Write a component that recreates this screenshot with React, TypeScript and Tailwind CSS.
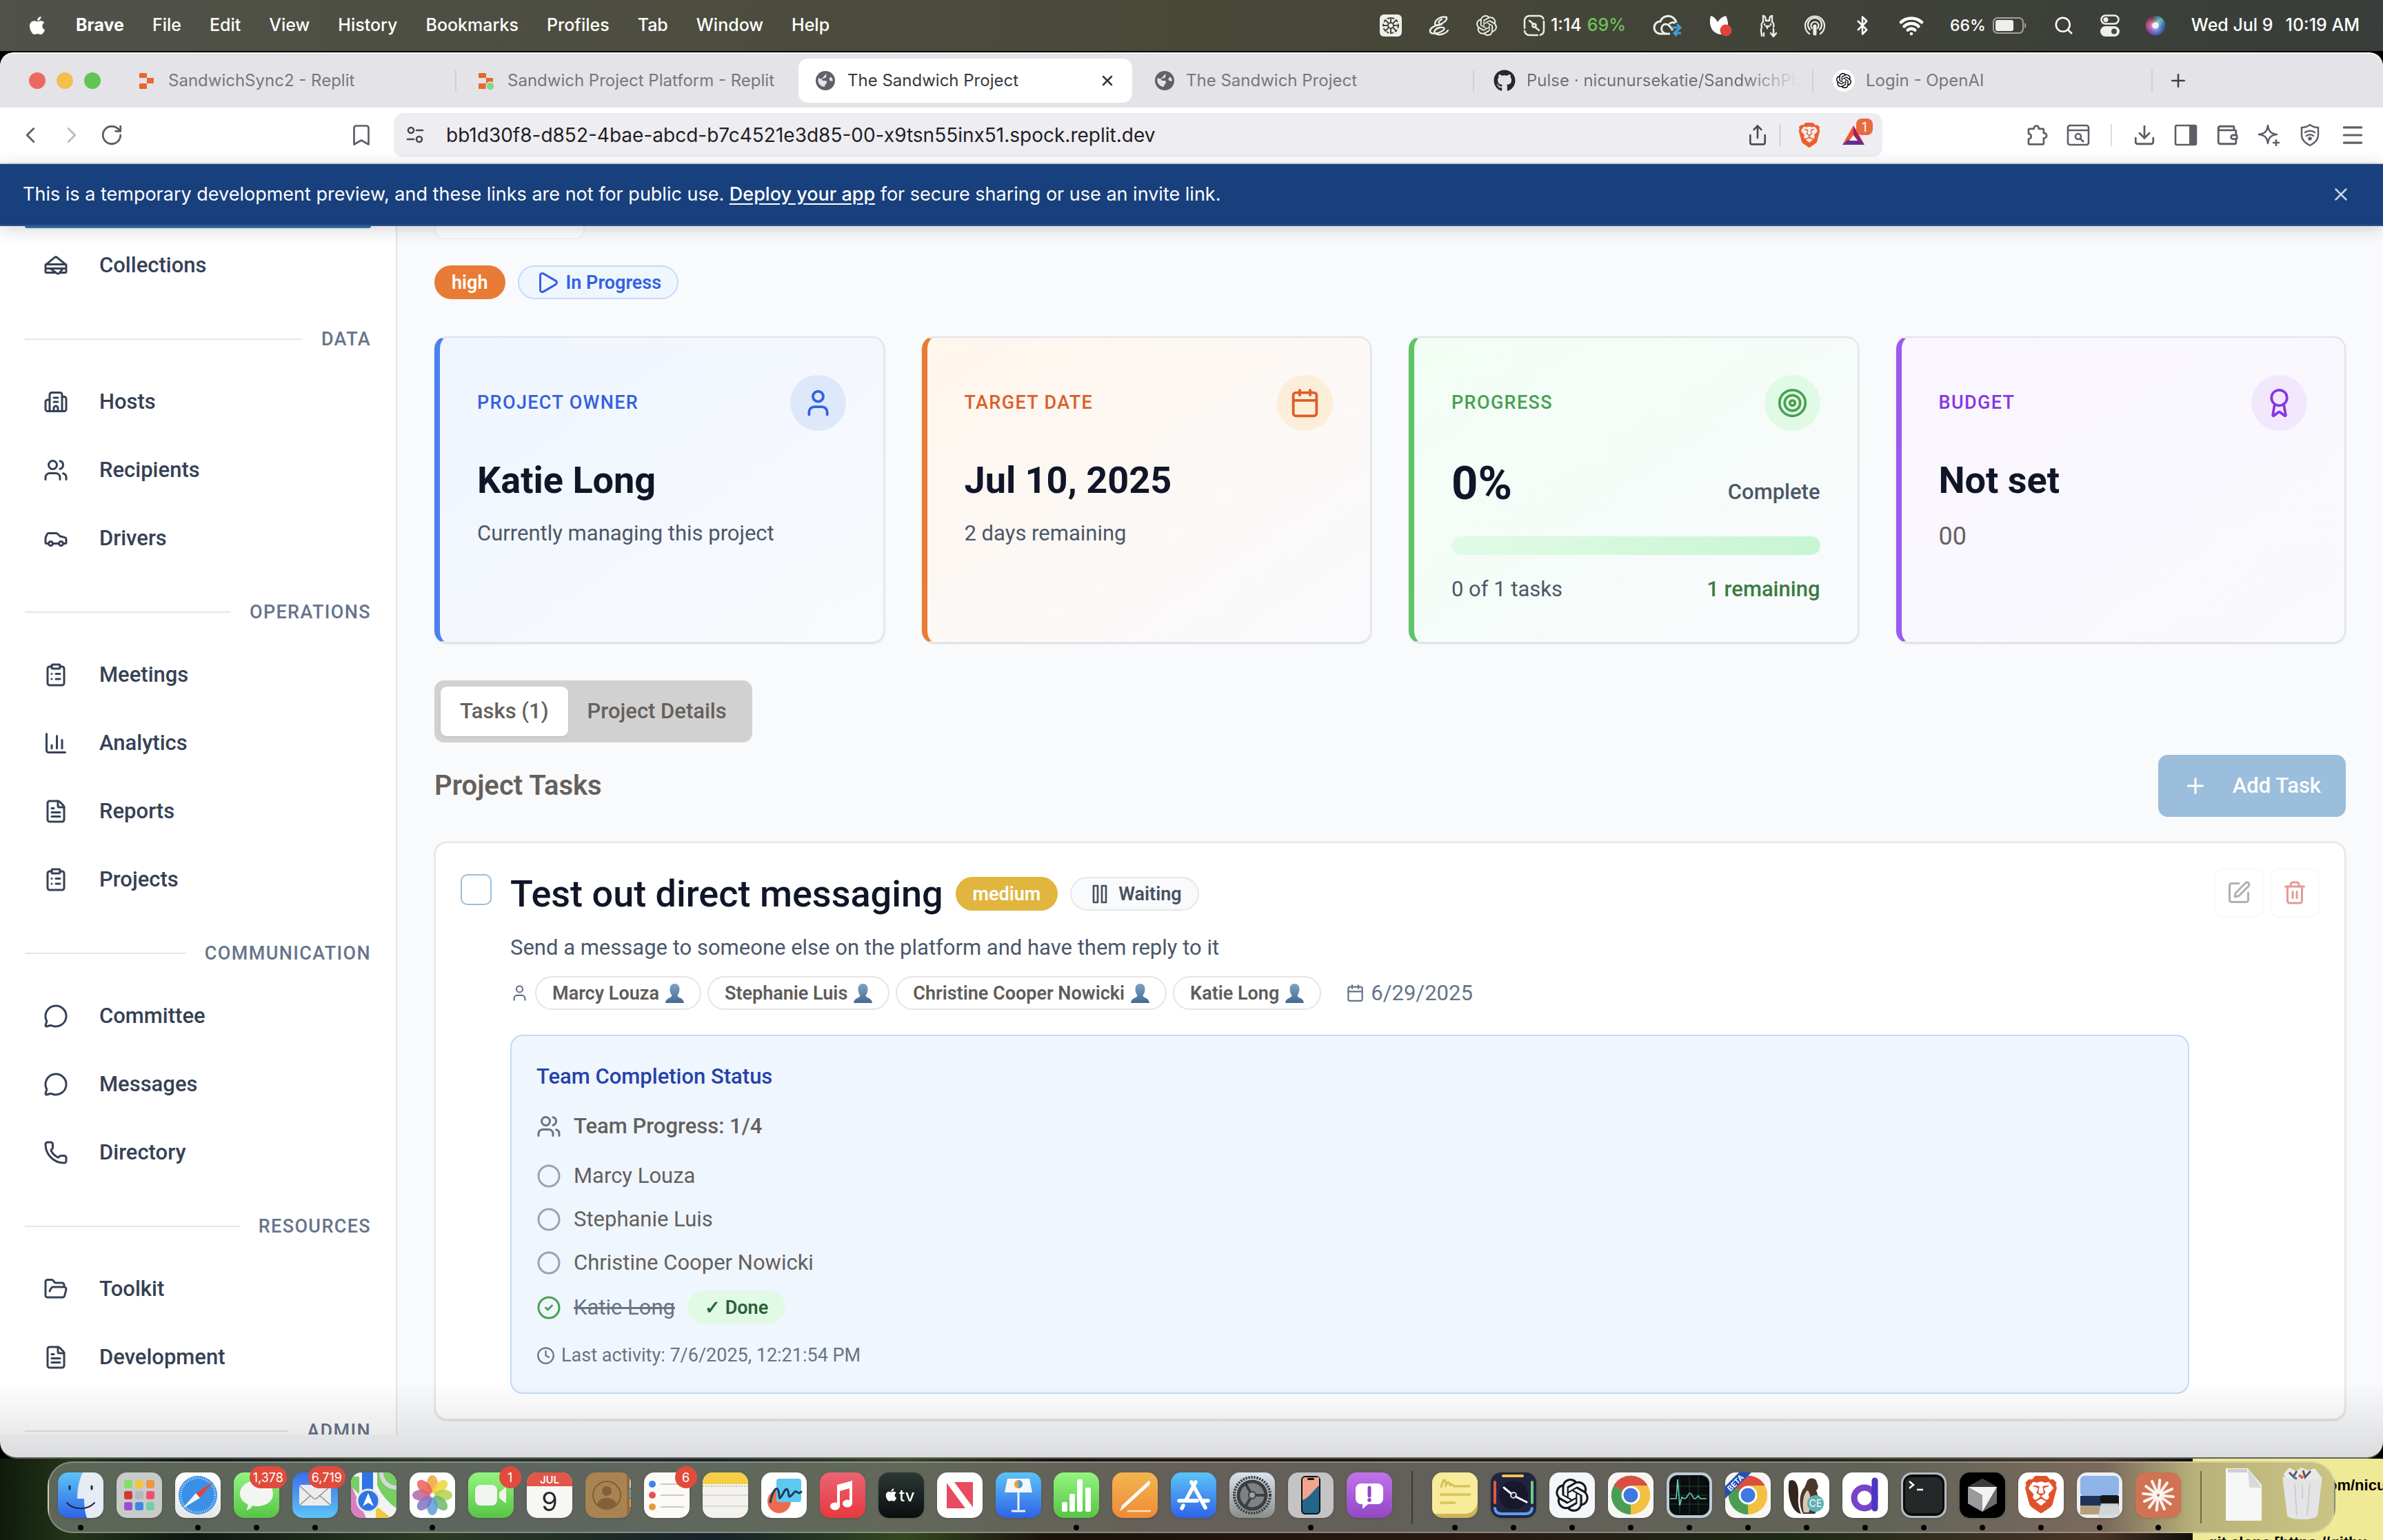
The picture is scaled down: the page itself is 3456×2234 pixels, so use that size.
import React from "react";
import {
  Sandwich, Building2, Users, Car, ClipboardList, ChartColumn, FileText, MessageCircle, Phone, FolderOpen,
  User, Calendar, Target, Award, Play, Plus, SquarePen, Trash2, Circle, CircleCheck, Clock, X,
  ChevronLeft, ChevronRight, RotateCw, Bookmark, Share, Download, Wallet, Menu,
  Search, Bluetooth, Wifi,
} from "lucide-react";
import { FaApple, FaGithub } from "react-icons/fa";
import { SiOpenai, SiBrave } from "react-icons/si";

type IconType = React.ComponentType<{ className?: string; strokeWidth?: number }>;

/* ---------- macOS menu bar ---------- */

function MenuBar() {
  const menus = ["File", "Edit", "View", "History", "Bookmarks", "Profiles", "Tab", "Window", "Help"];
  return (
    <header className="flex h-[74px] shrink-0 items-center justify-between bg-linear-to-r from-[#50524a] via-[#4a4938] to-[#383d3a] pr-[34px] pl-[39px] text-[25px] font-medium text-white">
      <nav className="flex items-center gap-[41px]">
        <FaApple className="size-[30px]" />
        <span className="font-bold">Brave</span>
        {menus.map((m) => (
          <button key={m}>{m}</button>
        ))}
      </nav>
      <div className="flex items-center gap-[38px]">
        <svg viewBox="0 0 32 32" className="size-8">
          <rect width="32" height="32" rx="6" fill="#eeeeea" />
          <g stroke="#45463a" strokeWidth="2" fill="none">
            <circle cx="16" cy="16" r="4" />
            <circle cx="16" cy="16" r="11" strokeDasharray="4 2.6" />
            <path d="M16 4v8M16 20v8M4 16h8M20 16h8M7.500 7.500l5.500 5.500M19 19l5.500 5.500M24.500 7.500L19 13M13 19l-5.500 5.500" />
          </g>
        </svg>
        <svg viewBox="0 0 32 32" className="size-8" fill="none" stroke="#eeeeea" strokeWidth="2.4" strokeLinecap="round">
          <path d="M27 4c-8-2-16 3-17 9 0 4 6 3 10 1M27 4c1 4-4 9-12 11C8 17 2 20 3 25c2 5 15 2 20-3 2-3-2-4-6-3-6 1-10 6-6 9 5 3 15 0 18-5M20 7c-3 1-5 4-4 5" />
        </svg>
        <SiOpenai className="size-[30px] text-[#eeeeea]" />
        <div className="flex items-center gap-2">
          <svg viewBox="0 0 32 32" className="size-8" fill="none" stroke="#eeeeea" strokeWidth="2.5" strokeLinecap="round">
            <rect x="2" y="2" width="28" height="28" rx="7" strokeDasharray="22 4" />
            <path d="M9 9l6 5M17 18l6 5" />
            <circle cx="16" cy="16" r="2.500" />
          </svg>
          <span>1:14</span>
          <span className="text-[#6cc35a]">69%</span>
        </div>
        <svg viewBox="0 0 44 34" className="h-[34px] w-11" fill="none" stroke="#eeeeea" strokeWidth="3">
          <path d="M12 29a9 9 0 0 1 0-18A12 12 0 0 1 35 13M20 29c-9-2-8-14 0-14 5 0 7 5 10 9M25 15c2-3 6-3 8-1" />
          <path d="M12 29h14" />
          <path d="M28 20h12M36 15l5 5-5 5M42 28H32M36 24l-4 4 4 4" stroke="#3fa2dd" strokeWidth="3" />
        </svg>
        <svg viewBox="0 0 34 34" className="size-[34px]">
          <path d="M3 3c5 1 8 5 10 9 3-5 7-8 12-9 3 6 4 13 2 19l-9 8C6 29-1 18 3 3z" fill="#fff" />
          <circle cx="25" cy="24" r="8.500" fill="#e0443c" />
        </svg>
        <svg viewBox="0 0 28 34" className="h-[34px] w-7" fill="none" stroke="#eeeeea" strokeWidth="2.400" strokeLinecap="round">
          <path d="M5 32c0-4-1-5-1-8 0-2 1-3 1-5-1-3 0-6 2-7V3c3 0 4 4 4 7h5c0-3 1-7 4-7v9c2 1 3 4 2 7M11 18h5M13 18v3M9 15v1M18 15v1" />
          <path d="M8 32v-4M22 22v10M18 28l4 5 4-5" />
        </svg>
        <svg viewBox="0 0 32 32" className="size-8" fill="none" stroke="#eeeeea" strokeWidth="2.200" strokeLinecap="round">
          <path d="M8 28a14 14 0 1 1 16 0M9 22a10 10 0 1 1 14 0M12 20a5.500 5.500 0 1 1 8 0" />
          <path d="M16 17v11" strokeWidth="5" />
        </svg>
        <Bluetooth className="size-[30px]" strokeWidth={2} />
        <Wifi className="size-[36px]" strokeWidth={3} />
        <div className="flex items-center gap-[10px]">
          <span className="text-[23px]">66%</span>
          <svg viewBox="0 0 50 24" className="h-6 w-[50px]">
            <rect x="1" y="1" width="43" height="22" rx="6" fill="none" stroke="#a2a39c" strokeWidth="2" />
            <rect x="4" y="4" width="26" height="16" rx="3" fill="#eee" />
            <path d="M46 8c3 1 3 7 0 8z" fill="#a2a39c" />
          </svg>
        </div>
        <Search className="size-[30px]" strokeWidth={2} />
        <svg viewBox="0 0 28 32" className="h-8 w-7">
          <rect x="1.500" y="1.500" width="25" height="12" rx="6" fill="none" stroke="#eee" strokeWidth="2.500" />
          <circle cx="8" cy="7.500" r="3.500" fill="#eee" />
          <rect x="0" y="17" width="28" height="15" rx="7.500" fill="#eee" />
          <circle cx="20" cy="24.500" r="4" fill="#45483a" />
        </svg>
        <span className="size-7 rounded-full bg-[conic-gradient(from_40deg,#3fb6a8,#2a4fa8,#3a62c8,#7a3fb0,#c23a6b,#5a3048,#3fb6a8)] p-[9px]">
          <span className="block size-[10px] rounded-full bg-white/90 shadow-[0_0_6px_4px_rgba(255,255,255,0.5)]" />
        </span>
        <div className="flex gap-[18px]">
          <span>Wed Jul 9</span>
          <span>10:19 AM</span>
        </div>
      </div>
    </header>
  );
}

/* ---------- browser chrome ---------- */

function GlobeDot() {
  return (
    <svg viewBox="0 0 30 30" className="size-[30px] shrink-0">
      <circle cx="15" cy="15" r="14" fill="#5f6268" />
      <path d="M17 4c-2 3 1 4-2 7-2 1-5 0-5 3 2 2 5 0 7 2 1 3-3 4-3 8C6 23 3 17 5 11c2 1 4 2 5 1M24 10c-3 0-4 2-3 4s3 2 5 1" fill="#e4e3e8" />
    </svg>
  );
}

function ReplitMark({ live }: { live?: boolean }) {
  return (
    <svg viewBox="0 0 30 30" className="size-[30px] shrink-0">
      <path d="M5 4h9a1 1 0 0 1 1 1v6H5a1 1 0 0 1-1-1V5a1 1 0 0 1 1-1zM15 11h9a1 1 0 0 1 1 1v6a1 1 0 0 1-1 1h-9zM5 19h10v7a1 1 0 0 1-1 1H5a1 1 0 0 1-1-1v-6a1 1 0 0 1 1-1z" fill="#e8672c" />
      {live && <circle cx="21" cy="23" r="6" fill="#7ed98a" stroke="#e4e3e8" strokeWidth="1.500" />}
    </svg>
  );
}

function BrowserTab({ icon, title, active, fade, line }: { icon: React.ReactNode; title: string; active?: boolean; fade?: boolean; line?: boolean }) {
  return (
    <div className={line ? "flex h-8 w-[492px] items-center border-r-2 border-[#d0cfd6]" : "flex h-8 w-[492px] items-center"}>
      <button
        className={
          active
            ? "mx-[4px] flex h-16 flex-1 items-center gap-[17px] overflow-hidden rounded-[14px] bg-white px-6 text-[#36383d]"
            : "flex h-16 flex-1 items-center gap-4 overflow-hidden pr-5 pl-7 text-[#77777d]"
        }
      >
        {icon}
        <span className={fade ? "flex-1 overflow-hidden bg-linear-to-r from-[#6d6d73] from-80% to-transparent bg-clip-text text-left whitespace-nowrap text-transparent" : "flex-1 text-left whitespace-nowrap"}>{title}</span>
        {active && <X className="size-6 text-[#36383d]" strokeWidth={2.500} />}
      </button>
    </div>
  );
}

function TabStrip() {
  return (
    <div className="flex h-20 shrink-0 items-center rounded-t-[20px] border-t-2 border-white bg-[#e4e3e8] pl-[42px] text-[24px]">
      <div className="flex w-[128px] gap-4">
        <span className="size-6 rounded-full bg-[#ed6a5e]" />
        <span className="size-6 rounded-full bg-[#f4bf4f]" />
        <span className="size-6 rounded-full bg-[#61c554]" />
      </div>
      <BrowserTab icon={<ReplitMark />} title="SandwichSync2 - Replit" line />
      <BrowserTab icon={<ReplitMark live />} title="Sandwich Project Platform - Replit" />
      <BrowserTab icon={<GlobeDot />} title="The Sandwich Project" active />
      <BrowserTab icon={<GlobeDot />} title="The Sandwich Project" line />
      <BrowserTab icon={<FaGithub className="size-[32px] shrink-0 text-[#24292f]" />} title="Pulse · nicunursekatie/SandwichPla" fade line />
      <BrowserTab
        icon={
          <span className="flex size-[32px] shrink-0 items-center justify-center rounded-full bg-white">
            <SiOpenai className="size-[22px] text-black" />
          </span>
        }
        title="Login - OpenAI"
        line
      />
      <button aria-label="New tab" className="ml-[22px]">
        <Plus className="size-[30px] text-[#3e4045]" strokeWidth={2} />
      </button>
    </div>
  );
}

function Toolbar() {
  return (
    <div className="flex h-[82px] shrink-0 items-center justify-between border-b-2 border-[#dedde2] bg-white px-[25px] text-[#5c5f66]">
      <div className="flex items-center gap-[22px]">
        <button aria-label="Back"><ChevronLeft className="size-[38px]" strokeWidth={1.800} /></button>
        <button aria-label="Forward" className="text-[#bcbdc1]"><ChevronRight className="size-[38px]" strokeWidth={1.800} /></button>
        <button aria-label="Reload"><RotateCw className="size-[34px]" strokeWidth={2} /></button>
      </div>
      <button aria-label="Bookmark" className="ml-[327px]"><Bookmark className="size-[36px]" strokeWidth={1.800} /></button>
      <div className="mr-[207px] ml-[29px] flex h-16 flex-1 items-center gap-6 rounded-[14px] bg-[#eeedf2] pr-[22px] pl-[17px]">
        <svg viewBox="0 0 28 28" className="size-7" fill="none" stroke="#45474d" strokeWidth="2.600" strokeLinecap="round">
          <circle cx="8" cy="7" r="4" /><path d="M16 7h9M3 20h9" /><circle cx="20" cy="20" r="4" />
        </svg>
        <input aria-label="Address" readOnly defaultValue="bb1d30f8-d852-4bae-abcd-b7c4521e3d85-00-x9tsn55inx51.spock.replit.dev" className="ml-[7px] flex-1 bg-transparent text-[28px] text-[#1f2024] outline-none" />
        <Share className="size-[32px] text-[#4a4c52]" strokeWidth={2} />
        <span className="-ml-2 h-8 w-px bg-[#b9b9c0]" />
        <SiBrave className="size-[36px] text-[#ee5f2c]" />
        <span className="relative ml-1 flex">
          <svg viewBox="0 0 38 34" className="h-[34px] w-[38px]">
            <path d="M18 3L2 31h11l5-10z" fill="#ee5a2a" /><path d="M18 3l16 28-11-5-5-9z" fill="#9e1f63" /><path d="M2 31h32l-9-7H10z" fill="#662d91" /><path d="M18 17l-6 8h12z" fill="#fff" />
          </svg>
          <span className="absolute -top-[7px] left-[22px] flex h-6 w-6 items-center justify-center rounded-lg bg-[#ea6a3f] text-[18px] text-white">1</span>
        </span>
      </div>
      <div className="flex items-center gap-[26px]">
        <svg viewBox="0 0 24 24" className="size-[34px]" fill="none" stroke="currentColor" strokeWidth="1.900" strokeLinejoin="round">
          <path d="M9 5.500V5a2.500 2.500 0 0 1 5 0v.500h4a1 1 0 0 1 1 1V10h.500a2.500 2.500 0 0 1 0 5H19v5.500a1 1 0 0 1-1 1H4.500a1 1 0 0 1-1-1V16c3.500 0 3.500-5.500 0-5.500v-4a1 1 0 0 1 1-1z" />
        </svg>
        <svg viewBox="0 0 34 34" className="size-[34px]" fill="none" stroke="currentColor" strokeWidth="2.600">
          <rect x="2" y="3" width="30" height="28" rx="3" /><path d="M2 10h30" /><circle cx="17" cy="19" r="4" /><path d="M20 22l5 5" />
        </svg>
        <span className="mx-1 h-8 w-[2px] bg-[#dcdce1]" />
        <Download className="size-[34px]" strokeWidth={2} />
        <svg viewBox="0 0 34 34" className="size-[34px]">
          <rect x="2" y="3" width="30" height="28" rx="2" fill="none" stroke="currentColor" strokeWidth="2.600" /><path d="M22 3h9v28h-9z" fill="currentColor" />
        </svg>
        <Wallet className="size-[34px]" strokeWidth={2} />
        <svg viewBox="0 0 34 34" className="size-[34px]" fill="none" stroke="currentColor" strokeWidth="2.500" strokeLinejoin="round">
          <path d="M16 3c1 8 4 12 13 13-9 1-12 5-13 13-1-8-4-12-13-13 9-1 12-5 13-13z" /><path d="M28 23v10M23 28h10" />
        </svg>
        <svg viewBox="0 0 34 34" className="size-[34px]" fill="none" stroke="currentColor" strokeWidth="2.500" strokeLinecap="round">
          <path d="M17 2c4 3 8 4 12 4v11c0 7-6 12-12 15C11 29 5 24 5 17V6c4 0 8-1 12-4z" /><path d="M10 13c4-3 10-3 14 0M12 18c3-2 7-2 10 0" /><circle cx="17" cy="22" r="1.500" fill="currentColor" />
        </svg>
        <Menu className="size-[38px]" strokeWidth={2} />
      </div>
    </div>
  );
}

function PreviewBanner() {
  return (
    <div className="z-10 flex h-[90px] shrink-0 items-center justify-between border-b-2 border-[#2f4f8c] bg-[#18407d] pr-[46px] pl-[33px] text-[27px] text-white shadow-[0_4px_24px_rgba(0,0,0,0.18)]">
      <p>
        This is a temporary development preview, and these links are not for public use.{" "}
        <a href="#deploy" className="font-medium underline underline-offset-4">Deploy your app</a> for secure sharing or use an invite link.
      </p>
      <button aria-label="Dismiss"><X className="size-[30px] text-[#c9d5e8]" strokeWidth={2} /></button>
    </div>
  );
}

/* ---------- sidebar ---------- */

function NavItem({ icon: Icon, label }: { icon: IconType; label: string }) {
  return (
    <a href={`#${label.toLowerCase()}`} className="mb-[9px] flex h-[90px] items-center gap-[45px] px-[27px] text-[31px] font-medium">
      <Icon className="size-9" strokeWidth={2} />
      {label}
    </a>
  );
}

function NavHeading({ label }: { label: string }) {
  return (
    <h2 className="mt-[46px] mb-[30px] flex h-8 items-center gap-[27px] text-[27px] font-medium tracking-wider text-[#67748b]">
      <span className="h-[2px] flex-1 bg-[#e2e7ee]" />
      {label}
    </h2>
  );
}

const navGroups: { heading: string; items: [IconType, string][] }[] = [
  { heading: "DATA", items: [[Building2, "Hosts"], [Users, "Recipients"], [Car, "Drivers"]] },
  { heading: "OPERATIONS", items: [[ClipboardList, "Meetings"], [ChartColumn, "Analytics"], [FileText, "Reports"], [ClipboardList, "Projects"]] },
  { heading: "COMMUNICATION", items: [[MessageCircle, "Committee"], [MessageCircle, "Messages"], [Phone, "Directory"]] },
  { heading: "RESOURCES", items: [[FolderOpen, "Toolkit"], [FileText, "Development"]] },
  { heading: "ADMIN", items: [] },
];

function Sidebar() {
  return (
    <aside className="w-[576px] shrink-0 overflow-hidden border-r-2 border-[#e1e6ee] bg-white px-9 text-[#364155]">
      <div className="mb-[9px] h-[3px] rounded-b-[14px] bg-[#2f79b0]" />
      <NavItem icon={Sandwich} label="Collections" />
      {navGroups.map((g) => (
        <React.Fragment key={g.heading}>
          <NavHeading label={g.heading} />
          {g.items.map(([icon, label]) => (
            <NavItem key={label} icon={icon} label={label} />
          ))}
        </React.Fragment>
      ))}
    </aside>
  );
}

/* ---------- project page ---------- */

function StatCard({ label, icon: Icon, tone, labelTone, dot, children }: { label: string; icon: IconType; tone: string; labelTone: string; dot: string; children: React.ReactNode }) {
  return (
    <section className={`flex-1 rounded-[18px] border-2 border-l-8 bg-linear-to-br to-[#f9fafd] px-[54px] pt-[54px] pb-[54px] shadow-sm ${tone}`}>
      <div className={`mb-9 flex items-center justify-between ${labelTone}`}>
        <h3 className="text-[27px] font-medium tracking-wider">{label}</h3>
        <span className={`rounded-full p-[18px] ${dot}`}>
          <Icon className="size-[45px]" strokeWidth={2} />
        </span>
      </div>
      {children}
    </section>
  );
}

const bigValue = "mb-[18px] text-[54px] leading-[72px] font-bold text-[#101628]";

function StatCards() {
  return (
    <div className="mt-[54px] flex gap-[54px]">
      <StatCard label="PROJECT OWNER" icon={User} tone="border-[#e3e4e7] border-l-[#4b80ee] from-[#eff5ff]" labelTone="text-[#3561e0]" dot="bg-[#dde9fb]">
        <p className={bigValue}>Katie Long</p>
        <p className="text-[31px] leading-[45px] text-[#4c5768]">Currently managing this project</p>
      </StatCard>
      <StatCard label="TARGET DATE" icon={Calendar} tone="border-[#e3e4e7] border-l-[#e87b35] from-[#fff6ed]" labelTone="text-[#dc5f28]" dot="bg-[#fdeed9]">
        <p className={bigValue}>Jul 10, 2025</p>
        <p className="text-[31px] leading-[45px] text-[#4c5768]">2 days remaining</p>
      </StatCard>
      <StatCard label="PROGRESS" icon={Target} tone="border-[#e3e4e7] border-l-[#5dc467] from-[#f2fef4]" labelTone="text-[#49a152]" dot="bg-[#e1fae6]">
        <div className="mb-9 flex items-baseline justify-between">
          <span className="text-[67px] leading-[81px] font-bold text-[#101628]">0%</span>
          <span className="text-[31px] leading-[45px] font-medium text-[#4c5768]">Complete</span>
        </div>
        <div role="progressbar" aria-valuenow={0} className="mb-[27px] h-[27px] rounded-full bg-linear-to-r from-[#e1fbe6] to-[#c7f5d2]" />
        <div className="flex justify-between text-[31px] leading-[45px]">
          <span className="text-[#4c5768]">0 of 1 tasks</span>
          <span className="font-medium text-[#3a7c43]">1 remaining</span>
        </div>
      </StatCard>
      <StatCard label="BUDGET" icon={Award} tone="border-[#e3e4e7] border-l-[#9b5bee] from-[#faf5ff]" labelTone="text-[#8637e2]" dot="bg-[#f1e8fd]">
        <p className={bigValue}>Not set</p>
        <p className="text-[36px] leading-[54px] text-[#66615e]">00</p>
      </StatCard>
    </div>
  );
}

const badge = "flex h-[49px] items-center gap-[9px] rounded-full border-2 px-[23px] text-[27px] leading-9 font-semibold";

function PauseBars({ className }: { className?: string }) {
  return (
    <svg viewBox="0 0 24 24" className={className} fill="none" stroke="currentColor" strokeWidth="1.800" strokeLinejoin="round">
      <rect x="6" y="4" width="4" height="16" />
      <rect x="14" y="4" width="4" height="16" />
    </svg>
  );
}

function Chip({ name }: { name: string }) {
  return (
    <span className={`${badge} border-[#e5e5e7] text-[#615c59]`}>
      {name}
      <svg viewBox="0 0 27 28" className="h-7 w-[27px]">
        <defs>
          <linearGradient id="bust" x1="0" y1="0" x2="0" y2="1">
            <stop offset="0" stopColor="#7fa3c4" />
            <stop offset="1" stopColor="#456a92" />
          </linearGradient>
        </defs>
        <path d="M13.500 0c4.500 0 7 3 7 8 0 4-1.500 7-3 9 0 4 9 3 9.500 11H0c.5-8 9.500-7 9.500-11-1.500-2-3-5-3-9 0-5 2.500-8 7-8z" fill="url(#bust)" />
      </svg>
    </span>
  );
}

const people = ["Marcy Louza", "Stephanie Luis", "Christine Cooper Nowicki"];

function TeamStatus() {
  return (
    <section className="mt-9 flex flex-col rounded-[18px] border-2 border-[#c3dafa] bg-[#eff6fe] p-9 text-[31px] leading-[45px] text-[#64605d]">
      <h4 className="font-medium text-[#2642a9]">Team Completion Status</h4>
      <p className="mt-[27px] mb-[9px] flex items-center gap-[18px] font-medium">
        <Users className="size-9 text-[#6b7280]" strokeWidth={2} />
        Team Progress: 1/4
      </p>
      <ul>
        {people.map((p) => (
          <li key={p} className="mt-[18px] flex items-center gap-[18px]">
            <Circle className="size-9 text-[#9ca3af]" strokeWidth={2} />
            {p}
          </li>
        ))}
        <li className="mt-[18px] flex items-center gap-[18px]">
          <CircleCheck className="size-9 text-[#49a152]" strokeWidth={2} />
          <span className="text-[#6b7280] line-through">Katie Long</span>
          <span className={`${badge} border-transparent bg-[#e1fae6] text-[#2d6238]`}>✓ Done</span>
        </li>
      </ul>
      <p className="mt-[27px] flex items-center gap-[9px] text-[27px] leading-9 text-[#6b7280]">
        <Clock className="size-[27px]" strokeWidth={2} />
        Last activity: 7/6/2025, 12:21:54 PM
      </p>
    </section>
  );
}

function TaskCard() {
  return (
    <article className="mt-9 flex items-start rounded-[18px] border-2 border-[#e5e5e8] bg-white p-9 shadow-sm">
      <input type="checkbox" aria-label="Mark task complete" className="mt-[9px] size-[45px] appearance-none rounded-[10px] border-2 border-[#9abedb] bg-white" />
      <div className="ml-[27px] flex-1">
        <div className="flex h-[75px] items-center gap-[18px]">
          <h3 className="text-[54px] leading-[72px] font-medium text-[#101628]">Test out direct messaging</h3>
          <span className={`${badge} border-transparent bg-[#e1b53e] bg-origin-border text-white`}>medium</span>
          <span className={`${badge} border-[#e5e7eb] bg-[#f9fafc] text-[#47515f]`}>
            <PauseBars className="size-9" />
            Waiting
          </span>
        </div>
        <p className="mt-[18px] text-[31px] leading-[45px] text-[#4a576a]">Send a message to someone else on the platform and have them reply to it</p>
        <div className="mt-[19px] flex items-center gap-9 text-[#667489]">
          <div className="flex items-center gap-[9px]">
            <User className="size-[27px]" strokeWidth={2} />
            {[...people, "Katie Long"].map((p) => (
              <Chip key={p} name={p} />
            ))}
          </div>
          <span className="flex items-center gap-[9px] text-[31px] leading-[45px]">
            <Calendar className="size-[27px]" strokeWidth={2} />
            6/29/2025
          </span>
        </div>
        <TeamStatus />
      </div>
      <div className="ml-9 flex gap-[9px]">
        <button aria-label="Edit task" className="flex size-[72px] items-center justify-center rounded-[14px] border-2 border-[#f8f8f9] text-[#b3aeae]">
          <SquarePen className="size-9" strokeWidth={2} />
        </button>
        <button aria-label="Delete task" className="flex size-[72px] items-center justify-center rounded-[14px] border-2 border-[#f8f8f9] text-[#e59a95]">
          <Trash2 className="size-9" strokeWidth={2} />
        </button>
      </div>
    </article>
  );
}

function ProjectPage() {
  return (
    <main className="flex-1 overflow-hidden bg-[#f9fafc] px-[54px]">
      <div className="flex h-[57px] items-start">
        <div className="h-[19px] w-[218px] rounded-b-[14px] border-x-2 border-b-2 border-[#f2f3f5] bg-white" />
      </div>
      <div className="flex gap-[18px]">
        <span className={`${badge} border-[#e87b35] bg-[#e87b35] text-white`}>high</span>
        <span className={`${badge} border-[#c3dafa] bg-[#eff6fe] text-[#3561e0]`}>
          <Play className="size-9" strokeWidth={2} />
          In Progress
        </span>
      </div>
      <StatCards />
      <div role="tablist" className="mt-[54px] inline-flex rounded-[14px] bg-[#d1d1d1] p-[9px] text-[31px] font-medium text-[#66605c]">
        <button role="tab" aria-selected className="h-[72px] rounded-[9px] bg-white px-7 shadow-sm">Tasks (1)</button>
        <button role="tab" className="h-[72px] px-7">Project Details</button>
      </div>
      <div className="mt-[18px] flex items-center justify-between">
        <h2 className="text-[40px] font-semibold text-[#66605c]">Project Tasks</h2>
        <button className="flex h-[90px] items-center gap-9 rounded-[14px] bg-[#9abedb] px-9 text-[31px] font-medium text-white">
          <Plus className="size-9" strokeWidth={2} />
          Add Task
        </button>
      </div>
      <TaskCard />
    </main>
  );
}

/* ---------- dock ---------- */

function Tile({ bg, children }: { bg: string; children?: React.ReactNode }) {
  return (
    <svg viewBox="0 0 66 66" className="size-[66px] drop-shadow">
      <defs>
        <linearGradient id="g-blue" x1="0" y1="0" x2="0" y2="1"><stop offset="0" stopColor="#5bc4f8" /><stop offset="1" stopColor="#2f63e6" /></linearGradient>
        <linearGradient id="g-mail" x1="0" y1="0" x2="0" y2="1"><stop offset="0" stopColor="#3a6ee8" /><stop offset="1" stopColor="#5ec4f8" /></linearGradient>
        <linearGradient id="g-green" x1="0" y1="0" x2="0" y2="1"><stop offset="0" stopColor="#92f57e" /><stop offset="1" stopColor="#58c546" /></linearGradient>
        <linearGradient id="g-red" x1="0" y1="0" x2="0" y2="1"><stop offset="0" stopColor="#ec6474" /><stop offset="1" stopColor="#e8383e" /></linearGradient>
        <linearGradient id="g-orange" x1="0" y1="0" x2="0" y2="1"><stop offset="0" stopColor="#f4b550" /><stop offset="1" stopColor="#ef8a37" /></linearGradient>
        <linearGradient id="g-purple" x1="0" y1="0" x2="0" y2="1"><stop offset="0" stopColor="#c173ea" /><stop offset="1" stopColor="#9147c4" /></linearGradient>
        <linearGradient id="g-grey" x1="0" y1="0" x2="0" y2="1"><stop offset="0" stopColor="#d8e4ec" /><stop offset="1" stopColor="#8b8d8e" /></linearGradient>
        <linearGradient id="g-dark" x1="0" y1="0" x2="0" y2="1"><stop offset="0" stopColor="#2c3835" /><stop offset="1" stopColor="#0b0e10" /></linearGradient>
        <linearGradient id="g-white" x1="0" y1="0" x2="0" y2="1"><stop offset="0" stopColor="#ffffff" /><stop offset="1" stopColor="#e6e6e8" /></linearGradient>
        <clipPath id="tile"><rect width="66" height="66" rx="15" /></clipPath>
      </defs>
      <g clipPath="url(#tile)">
        <rect width="66" height="66" fill={bg} />
        {children}
      </g>
    </svg>
  );
}

function ChromeDisc() {
  return (
    <>
      <path d="M33 33L8.600 19A28 28 0 0 1 57.400 19z" fill="#d94f41" />
      <path d="M33 33L57.400 19A28 28 0 0 1 33 61z" fill="#f2c043" />
      <path d="M33 33V61A28 28 0 0 1 8.600 19z" fill="#4a9e54" />
      <path d="M33 19h24.400L45 40z" fill="#f2c043" />
      <path d="M8.600 19L21 40l12 7-7 13z" fill="#4a9e54" />
      <path d="M8.600 19A28 28 0 0 1 57.400 19H33L21 26z" fill="#d94f41" />
      <circle cx="33" cy="33" r="13.500" fill="#fff" />
      <circle cx="33" cy="33" r="10.500" fill="#3f78e0" />
    </>
  );
}

const petals = ["#f2a33c", "#f0d63c", "#b5cf4a", "#6fb96a", "#5f9fd8", "#7d74c4", "#b566a8", "#e9615a"];
const launch = ["#7fe06a", "#f4c542", "#ee9640", "#d03a32", "#b4b8bc", "#ec5568", "#9b4fd0", "#3f86ef", "#6fd0a8"];

type DockApp = { name: string; running?: boolean; count?: string; art: React.ReactNode };

const apps: DockApp[] = [
  { name: "Finder", running: true, art: (
    <Tile bg="url(#g-blue)"><path d="M36 0c-6 12-8 26-8 38h10c0 10 1 20 4 28h24V0z" fill="#e6ebf4" /><g stroke="#1d2a44" strokeWidth="3" strokeLinecap="round" fill="none"><path d="M17 20v4M49 20v4" /><path d="M13 44c10 11 30 11 40 0" strokeWidth="2" /></g></Tile>
  ) },
  { name: "Launchpad", art: (
    <Tile bg="#c9cbca">{launch.map((c, i) => <rect key={c} x={11 + (i % 3) * 16} y={11 + Math.floor(i / 3) * 16} width="12" height="12" rx="3" fill={c} />)}</Tile>
  ) },
  { name: "Safari", running: true, art: (
    <Tile bg="url(#g-white)"><circle cx="33" cy="33" r="28" fill="#3a90e6" /><circle cx="33" cy="33" r="25" fill="none" stroke="#cfe5fa" strokeWidth="3" strokeDasharray="1 2.200" /><path d="M55 14L36 37l-6-7z" fill="#e0453a" /><path d="M11 52l19-22 6 7z" fill="#f4f4f4" /></Tile>
  ) },
  { name: "Messages", running: true, count: "1,378", art: (
    <Tile bg="url(#g-green)"><path d="M33 12c14 0 24 8 24 19S47 49 33 49c-2 0-4 0-6-1-2 4-5 6-9 7 2-3 3-6 2-9C13 43 9 37 9 31c0-11 10-19 24-19z" fill="#f3f5f2" /></Tile>
  ) },
  { name: "Mail", running: true, count: "6,719", art: (
    <Tile bg="url(#g-mail)"><rect x="10" y="18" width="46" height="30" rx="4" fill="#ececee" /><path d="M11 20l19 17c2 2 4 2 6 0l19-17M11 47l16-14M55 47L39 33" fill="none" stroke="#8e8e90" strokeWidth="1.500" /></Tile>
  ) },
  { name: "Maps", art: (
    <Tile bg="#f3f3f3"><path d="M38 0h28v52C55 45 42 30 38 18z" fill="#76cf63" /><path d="M0 18l22 48H0z" fill="#d97fc0" /><path d="M16 0h16v34H16z" fill="#2f74e4" /><path d="M0 6l12 0v26L0 20z" fill="#76cf63" /><path d="M36 48l22 18H36z" fill="#f2c741" /><path d="M44 0a22 22 0 0 0 22 22" fill="none" stroke="#d5d6da" strokeWidth="6" /><circle cx="25" cy="41" r="16" fill="#2f74e4" stroke="#e8e8ea" strokeWidth="3" /><path d="M25 30l8 19-8-5-8 5z" fill="#fff" /></Tile>
  ) },
  { name: "Photos", running: true, art: (
    <Tile bg="#fff">{petals.map((c, i) => <ellipse key={c} cx="33" cy="17" rx="8" ry="13" fill={c} opacity="0.850" transform={`rotate(${i * 45} 33 33)`} />)}</Tile>
  ) },
  { name: "FaceTime", count: "1", art: (
    <Tile bg="url(#g-green)"><rect x="10" y="18" width="32" height="30" rx="8" fill="#f1f4ef" /><path d="M45 29l10-8v24l-10-8z" fill="#f1f4ef" /></Tile>
  ) },
  { name: "Calendar", art: (
    <Tile bg="#f7f7f5"><rect width="66" height="20" fill="#e25549" /><text x="33" y="16" textAnchor="middle" fontSize="15" fontWeight="600" fill="#fff">JUL</text><text x="33" y="56" textAnchor="middle" fontSize="38" fill="#2a2a2a">9</text></Tile>
  ) },
  { name: "Contacts", art: (
    <Tile bg="#a98451"><path d="M60 0h6v66h-6z" fill="#8d6d43" /><path d="M64 10h2v12h-2z" fill="#c9c9c9" /><path d="M64 24h2v12h-2z" fill="#5fa8d8" /><path d="M64 38h2v12h-2z" fill="#e8953f" /><circle cx="31" cy="33" r="20" fill="none" stroke="#7d5f38" strokeWidth="2" /><circle cx="31" cy="27" r="7" fill="#80613a" /><path d="M17 46c3-12 25-12 28 0-7 9-21 9-28 0z" fill="#80613a" /></Tile>
  ) },
  { name: "Reminders", count: "6", art: (
    <Tile bg="#fbfaf8"><circle cx="12" cy="17" r="5" fill="#3f82ee" /><circle cx="12" cy="33" r="5" fill="#e4544c" /><circle cx="12" cy="50" r="5" fill="#ea9a3a" /><path d="M24 17h34M24 33h34M24 50h34" stroke="#b9b9b9" strokeWidth="1.500" /></Tile>
  ) },
  { name: "Notes", art: (
    <Tile bg="#f3f2ee"><rect width="66" height="17" fill="#f6cf46" /><path d="M0 20h66" stroke="#b9b6a8" strokeWidth="1.500" strokeDasharray="2 2" /><path d="M0 33h66M0 49h66" stroke="#d2d1cc" strokeWidth="1.500" /></Tile>
  ) },
  { name: "Freeform", art: (
    <Tile bg="#fff"><circle cx="26" cy="42" r="17" fill="#ee6a4e" /><rect x="22" y="9" width="36" height="34" rx="4" fill="#5fc8ee" /><path d="M13 43c4-18 10-24 12-16s0 14 4 8 6-13 9-10 0 13 5 9 5-8 8-6 4 3 7 0" fill="none" stroke="#173a5e" strokeWidth="3" strokeLinecap="round" /></Tile>
  ) },
  { name: "Music", art: (
    <Tile bg="url(#g-red)"><path d="M25 18l22-6v33a7 5.500 0 1 1-4-5V23l-14 4v22a7 5.500 0 1 1-4-5z" fill="#fff" /></Tile>
  ) },
  { name: "TV", art: (
    <Tile bg="url(#g-dark)"><FaApple x="8" y="22" size={21} color="#fff" /><text x="30" y="42" fontSize="24" fontWeight="500" fill="#fff">tv</text></Tile>
  ) },
  { name: "News", art: (
    <Tile bg="#fff"><path d="M14 14h38v38H14z" fill="#e94b60" /><path d="M10 10h12l34 46H44z" fill="#fff" /></Tile>
  ) },
  { name: "Keynote", art: (
    <Tile bg="url(#g-blue)"><path d="M17 9h32l4 20H13z" fill="#f4f6f8" /><circle cx="33" cy="17" r="6" fill="#e7a13c" /><path d="M33 11a6 6 0 0 1 0 12z" fill="#4a9be0" /><path d="M33 29v25M23 56h20" stroke="#eef2f6" strokeWidth="3" /></Tile>
  ) },
  { name: "Numbers", running: true, art: (
    <Tile bg="url(#g-green)"><g fill="#fff"><rect x="12" y="43" width="8" height="14" rx="2" /><rect x="23" y="31" width="8" height="26" rx="2" /><rect x="34" y="10" width="8" height="47" rx="2" /><rect x="46" y="22" width="8" height="35" rx="2" /></g></Tile>
  ) },
  { name: "Pages", art: (
    <Tile bg="url(#g-orange)"><path d="M53 12c3 1 2 4 1 6L18 51l-7 5 3-8z" fill="#fff" /><path d="M22 56h34" stroke="#fbe0bd" strokeWidth="2.500" /></Tile>
  ) },
  { name: "App Store", art: (
    <Tile bg="url(#g-blue)"><g stroke="#fff" strokeWidth="5.500" strokeLinecap="round"><path d="M36 14L22 40M30 14l20 37M12 41h26M48 41h6M18 48l-2 4" /></g></Tile>
  ) },
  { name: "System Settings", art: (
    <Tile bg="url(#g-grey)"><circle cx="33" cy="33" r="26" fill="none" stroke="#3c3e40" strokeWidth="4" strokeDasharray="2.500 1.500" /><circle cx="33" cy="33" r="20" fill="#7f8284" stroke="#3c3e40" strokeWidth="5" /><path d="M33 33h20M33 33L23 16M33 33L23 50" stroke="#3c3e40" strokeWidth="4" /><circle cx="33" cy="33" r="5" fill="#9ea1a3" stroke="#3c3e40" strokeWidth="2" /></Tile>
  ) },
  { name: "iPhone Mirroring", running: true, art: (
    <Tile bg="#c4c4c4"><rect x="19" y="5" width="28" height="56" rx="6" fill="#111" /><rect x="21" y="7" width="24" height="52" rx="4" fill="#22678a" /><path d="M21 11a4 4 0 0 1 4-4h20v12C36 26 30 38 21 40z" fill="#f2a58e" /><rect x="28" y="8" width="10" height="3" rx="1.500" fill="#111" /></Tile>
  ) },
  { name: "Feedback Assistant", art: (
    <Tile bg="url(#g-purple)"><path d="M21 16h24a8 8 0 0 1 8 8v14a8 8 0 0 1-8 8H31l-8 7v-7h-2a8 8 0 0 1-8-8V24a8 8 0 0 1 8-8z" fill="#fff" /><path d="M33 22v12" stroke="#9147c4" strokeWidth="5" strokeLinecap="round" /><circle cx="33" cy="40" r="2.800" fill="#9147c4" /></Tile>
  ) },
];

const recent: DockApp[] = [
  { name: "Stickies", running: true, art: (
    <Tile bg="#cdb55d"><path d="M0 0h66v40c0 10-6 20-20 20H0z" fill="#f8ec9a" /><path d="M13 22c3-14 6-14 7-4 2-4 4-6 6 0 3-3 5 4 9 2h20" fill="none" stroke="#d3bd5b" strokeWidth="3" /><path d="M11 32h45M11 44h23" stroke="#dcc766" strokeWidth="4" /></Tile>
  ) },
  { name: "Timing", running: true, art: (
    <Tile bg="#22243f"><circle cx="33" cy="33" r="21" fill="#17182e" /><g fill="none" strokeWidth="4" strokeLinecap="round"><path d="M6 44V14" stroke="#e4574a" /><path d="M18 5h28" stroke="#f2c545" /><path d="M60 14v30" stroke="#6bd07a" /><path d="M6 52q1 8 10 8h34q9 0 10-8" stroke="#5c9ff0" /></g><path d="M19 22l11 9M36 35l16 8" stroke="#fff" strokeWidth="3" strokeLinecap="round" /><circle cx="33" cy="33" r="4" fill="none" stroke="#cfd2e6" strokeWidth="2" /></Tile>
  ) },
  { name: "ChatGPT", running: true, art: <Tile bg="#f3f6fb"><SiOpenai x="9" y="9" size={48} color="#16181c" /></Tile> },
  { name: "Chrome", running: true, art: <Tile bg="#f7f6f4"><ChromeDisc /></Tile> },
  { name: "Activity Monitor", running: true, art: (
    <Tile bg="#b9cbd6"><rect x="4" y="4" width="58" height="58" rx="12" fill="#0a0c0d" /><path d="M6 20h54M6 33h54M6 46h54M19 6v54M33 6v54M46 6v54" stroke="#21433c" strokeWidth="1" /><path d="M5 38h9l2-28 3 38 3-12 4 2c4 0 5-8 8-8s4 10 8 8l4-4 3 4h9" fill="none" stroke="#69d6b4" strokeWidth="1.600" /></Tile>
  ) },
  { name: "Chrome Beta", running: true, art: (
    <Tile bg="#f7f6f4"><ChromeDisc /><path d="M0 20L20 0h18L0 38z" fill="#2450b4" /><text x="15" y="19" textAnchor="middle" fontSize="11" fontWeight="700" fill="#fff" transform="rotate(-45 15 15)">BETA</text></Tile>
  ) },
  { name: "DBeaver", running: true, art: (
    <Tile bg="#fff"><path d="M8 12c10-4 14 8 13 22s2 20 4 26C10 58 4 28 8 12z" fill="#33261f" /><path d="M34 12c4-6 14-4 14 3 2 4 3 8-1 11 4 8 5 26-2 34H28c-8-16-4-32 2-38z" fill="#4b382c" /><path d="M34 26c6 2 6 26 2 32h-7c-3-12-1-26 5-32z" fill="#d8c7b2" /><circle cx="46" cy="45" r="12" fill="#5fb0b2" /><text x="46" y="50" textAnchor="middle" fontSize="14" fill="#fff">CE</text></Tile>
  ) },
  { name: "Dia", running: true, art: (
    <Tile bg="#fff"><circle cx="32" cy="37" r="15" fill="none" stroke="#7a43c9" strokeWidth="9" /><path d="M47 12v40" stroke="#4a36c0" strokeWidth="9" strokeLinecap="round" /></Tile>
  ) },
  { name: "Terminal", running: true, art: (
    <Tile bg="#b3bcc2"><rect x="3" y="3" width="60" height="60" rx="13" fill="#0b0b0b" /><rect x="6" y="7" width="54" height="52" rx="9" fill="#262728" /><path d="M12 13l6 5-6 5M23 25h9" fill="none" stroke="#fff" strokeWidth="2.500" /></Tile>
  ) },
  { name: "Cursor", running: true, art: (
    <Tile bg="#000"><path d="M33 9l21 12v24L33 57 12 45V21z" fill="#6c6c6c" /><path d="M33 9l21 12-21 3-21-3z" fill="#3c3c3c" /><path d="M12 21h42L33 57V33z" fill="#f2f2f2" /><path d="M12 21l21 12v24L12 45z" fill="#9a9a9a" /></Tile>
  ) },
  { name: "Brave", running: true, art: <Tile bg="#fff"><SiBrave x="6" y="5" size={54} color="#e2502c" /></Tile> },
  { name: "Preview", running: true, art: (
    <Tile bg="#eceef0"><rect x="5" y="5" width="56" height="30" rx="6" fill="#8fb4ea" /><rect x="5" y="34" width="56" height="14" fill="#1f3358" /><path d="M5 48h56v13H5z" fill="#b79f7e" /><rect x="34" y="33" width="27" height="12" rx="3" fill="#15171a" /><path d="M35 45h25l4 20H31z" fill="#d4dade" opacity="0.900" /></Tile>
  ) },
  { name: "Claude", running: true, art: (
    <Tile bg="#cf7352"><g stroke="#fbf3ee" strokeWidth="4" strokeLinecap="round">{Array.from({ length: 12 }, (_, i) => <path key={i} d="M33 29V11" transform={`rotate(${i * 30 + 6} 33 33)`} />)}</g></Tile>
  ) },
];

function DockItem({ app }: { app: DockApp }) {
  return (
    <button aria-label={app.name} className="relative flex w-[66px] flex-col items-center gap-[10px]">
      {app.art}
      <span className={app.running ? "size-2 rounded-full bg-black" : "size-2"} />
      {app.count && (
        <span className="absolute -top-[9px] -right-[11px] flex h-8 min-w-8 items-center justify-center rounded-full bg-[#e24b3c] px-[5px] text-[18px] text-white">{app.count}</span>
      )}
    </button>
  );
}

function DockLine() {
  return (
    <span className="flex h-[88px] w-5 justify-center">
      <span className="mt-[-2px] h-[76px] w-[2px] bg-black/40" />
    </span>
  );
}

function Dock() {
  return (
    <footer className="relative flex h-[118px] shrink-0 items-start justify-center overflow-hidden bg-[linear-gradient(90deg,#101a0c_0%,#24361a_3%,#0f1712_8%,#2b3b22_18%,#16222a_30%,#33481f_38%,#1b120c_44%,#2a1a10_62%,#1c2a14_75%,#4b3426_88%,#12100c_92%)]">
      <div className="absolute top-0 right-0 h-[118px] w-[276px] bg-[#f0e996] font-['Liberation_Sans',sans-serif] text-[22px] font-bold text-black">
        <span className="absolute top-[22px] left-[196px] whitespace-nowrap">om/nicu</span>
        <span className="absolute top-[105px] left-[22px] whitespace-nowrap">git clone [https://githu</span>
      </div>
      <div className="relative mx-[69px] mt-1 flex h-[104px] flex-1 items-start justify-between rounded-[36px] border-2 border-white/25 bg-[linear-gradient(90deg,#5d6658_0%,#5f655f_20%,#62695a_35%,#655f59_50%,#62605a_62%,#616358_80%,#7b6a5c_90%,#b9b37a_94%,#c9c384_100%)] px-[13px] pt-[14px]">
        {apps.map((a) => <DockItem key={a.name} app={a} />)}
        <DockLine />
        {recent.map((a) => <DockItem key={a.name} app={a} />)}
        <DockLine />
        <svg viewBox="0 0 66 80" className="mt-[-8px] h-20 w-[66px]">
          <path d="M7 2h32l20 24v52H7z" fill="#f6f6f6" /><path d="M39 2l20 28H41z" fill="#d9d9d9" /><path d="M10 3h28v5H10z" fill="#cfcfcf" />
        </svg>
        <svg viewBox="0 0 66 80" className="mt-[-8px] h-20 w-[66px]">
          <path d="M6 10l8-9 10 5 8-5 10 4 9-3 9 12-4 8H10z" fill="#e9e9ea" /><path d="M14 8l6 6 5-8M34 5l3 10 8-9" stroke="#565a60" strokeWidth="3" fill="none" /><path d="M28 12l6 4" stroke="#d66a3d" strokeWidth="4" /><path d="M20 14l5 4" stroke="#3f86c9" strokeWidth="4" />
          <path d="M4 14c12 6 46 6 58 0l-7 56c-1 8-43 8-44 0z" fill="#e4e4e6" /><path d="M22 24l3 46M44 24l-4 46M33 26v20" stroke="#cdcdd0" strokeWidth="2" />
        </svg>
      </div>
    </footer>
  );
}

export default function App() {
  return (
    <div className="flex h-screen flex-col overflow-hidden bg-black font-[Inter,sans-serif]">
      <MenuBar />
      <div className="relative mt-[2px] flex min-h-0 flex-1 flex-col overflow-hidden rounded-t-[20px] rounded-b-[24px] border-b-2 border-[#60625f] bg-[#f9fafc]">
        <TabStrip />
        <Toolbar />
        <PreviewBanner />
        <div className="flex min-h-0 flex-1 pb-[33px] font-[Roboto,sans-serif]">
          <Sidebar />
          <ProjectPage />
        </div>
        <div className="pointer-events-none absolute inset-x-0 bottom-0 h-[110px] bg-linear-to-t from-black/12 to-transparent" />
      </div>
      <Dock />
    </div>
  );
}
